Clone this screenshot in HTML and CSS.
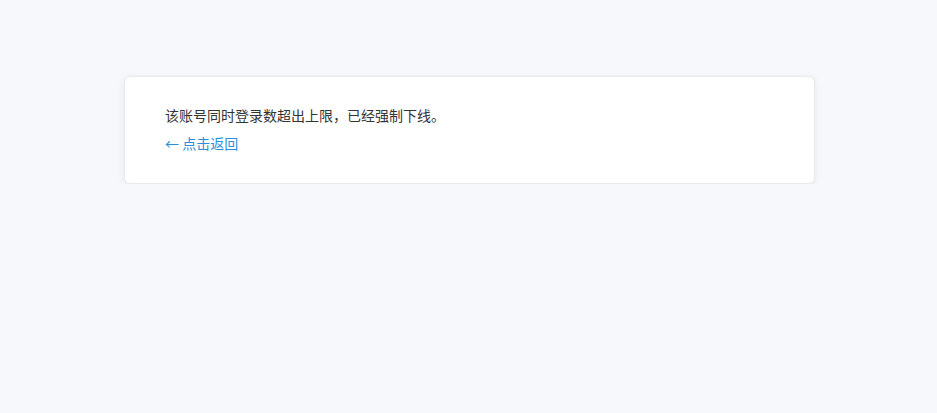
FILE: index.html
```html
<!DOCTYPE html>
<html lang="zh-CN">
<head>
<meta charset="utf-8">
<title>提示</title>
<link rel="stylesheet" href="styles.css">
</head>
<body>
<div class="card">
  <p class="msg">该账号同时登录数超出上限，已经强制下线。</p>
  <a class="back" href="#">← 点击返回</a>
</div>
</body>
</html>
```
FILE: styles.css
```css
html, body {
  margin: 0;
  padding: 0;
  background: #f6f8fb;
}
body {
  font-family: "Noto Sans CJK SC", "Noto Sans", sans-serif;
  font-size: 14px;
  color: #333;
}
.card {
  box-sizing: border-box;
  width: 691px;
  margin: 76px 0 0 124px;
  padding: 24px 40px 26px;
  background: #fff;
  border: 1px solid #e8eaee;
  border-radius: 6px;
  box-shadow: 0 2px 8px rgba(0, 0, 0, 0.07);
}
.msg {
  margin: 0;
  line-height: 28px;
}
.back {
  display: block;
  line-height: 28px;
  color: #2a8fd8;
  text-decoration: none;
}
```
